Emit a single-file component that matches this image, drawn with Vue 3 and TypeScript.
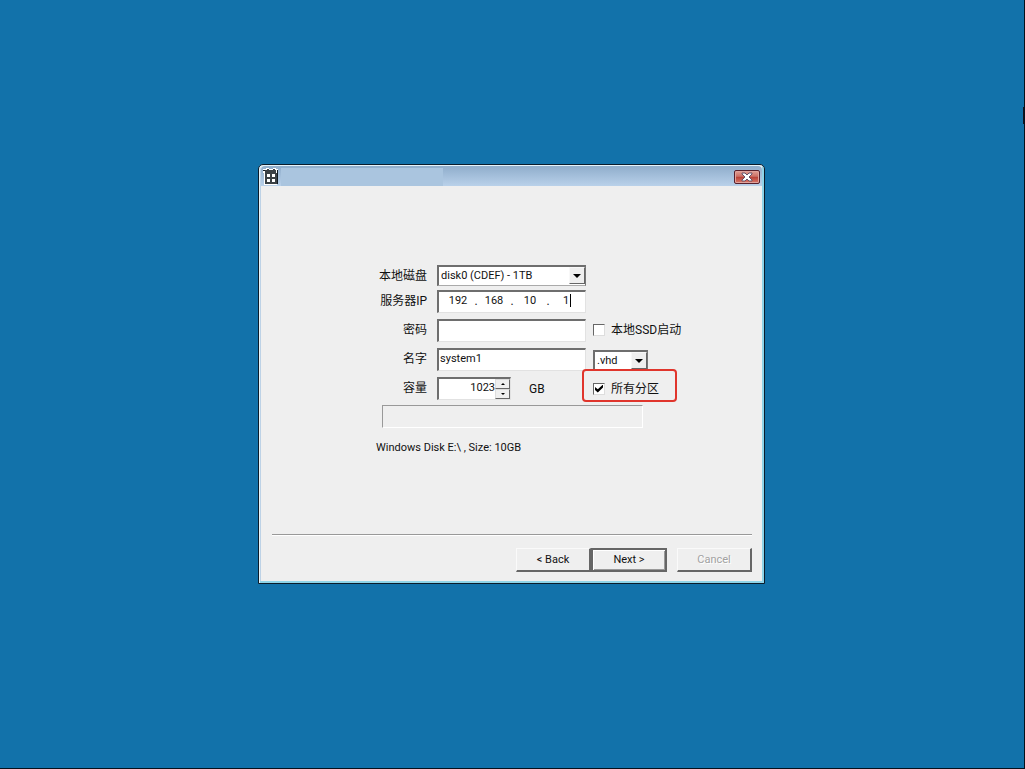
<script setup lang="ts">
import { ref } from 'vue'

const disk = ref('disk0 (CDEF) - 1TB')
const octets = ref(['192', '168', '10', '1'])
const password = ref('')
const name = ref('system1')
const extension = ref('.vhd')
const capacity = ref(1023)
const bootFromSsd = ref(false)
const allPartitions = ref(true)
</script>

<template>
  <main class="desktop">
    <section class="dialog" role="dialog" aria-label="System">
      <header class="titlebar">
        <svg class="app-icon" viewBox="0 0 16 17" aria-hidden="true">
          <path d="M0 1h3V0h3v1h4V0h3v1h2v4h-1v12H1V5H0z" fill="#fff" />
          <path d="M2 2h2V1h2v1h4V1h2v1h1v3h1v11H2z" fill="#3a4044" />
          <path d="M0 2h2v1H0zM14 2h1v2h-1zM14 4h1v12h-1z" fill="#101a22" />
          <path d="M4 6h3v3H4zM9 6h3v3H9zM4 11h3v3H4zM9 11h3v3H9z" fill="#fff" />
        </svg>
        <div class="caption"></div>
        <button class="close" type="button" aria-label="Close">
          <svg viewBox="0 0 14 10" aria-hidden="true">
            <path d="M2 1h3l2 2 2-2h3v1L9 5l3 3v1H9L7 7 5 9H2V8l3-3-3-3z" fill="#fff" stroke="#655269" stroke-width="1" />
          </svg>
        </button>
      </header>

      <form class="body" @submit.prevent>
        <div class="fields">
          <label class="name" for="disk">本地磁盘</label>
          <div class="combo disk">
            <select id="disk" v-model="disk"><option>disk0 (CDEF) - 1TB</option></select>
            <span class="drop"></span>
          </div>
          <span></span>

          <label class="name" for="octet0">服务器IP</label>
          <div class="box ip">
            <template v-for="(octet, i) in octets" :key="i">
              <span v-if="i > 0" class="dot">.</span>
              <span class="octet">
                <input :id="`octet${i}`" v-model="octets[i]" :aria-label="`IP ${i + 1}`" />
                <span v-if="i === 3" class="caret"></span>
              </span>
            </template>
          </div>
          <span></span>

          <label class="name" for="password">密码</label>
          <input id="password" v-model="password" class="box" type="password" />
          <label class="check"><input v-model="bootFromSsd" type="checkbox" />本地SSD启动</label>

          <label class="name" for="name">名字</label>
          <input id="name" v-model="name" class="box" type="text" />
          <div class="combo ext">
            <select v-model="extension" aria-label="Extension"><option>.vhd</option></select>
            <span class="drop"></span>
          </div>

          <label class="name" for="capacity">容量</label>
          <div class="size">
            <div class="box spin">
              <input id="capacity" v-model.number="capacity" type="text" />
              <div class="steps">
                <button type="button" aria-label="Increase" @click="capacity++"><i class="up"></i></button>
                <button type="button" aria-label="Decrease" @click="capacity--"><i class="down"></i></button>
              </div>
            </div>
            <span>GB</span>
          </div>
          <label class="check marked"><input v-model="allPartitions" type="checkbox" />所有分区</label>
        </div>

        <div class="progress" role="progressbar" aria-label="Progress"></div>
        <p class="info">Windows Disk E:\ , Size: 10GB</p>

        <footer class="actions">
          <button type="button">&lt; Back</button>
          <button type="submit" class="default">Next &gt;</button>
          <button type="button" class="cancel" disabled>Cancel</button>
        </footer>
      </form>
    </section>
  </main>
</template>

<style>
body {
  margin: 0;
}
</style>

<style scoped>
* {
  box-sizing: border-box;
}
.desktop {
  position: relative;
  display: flex;
  align-items: center;
  justify-content: center;
  min-height: 100vh;
  padding: 0 1px 20px 0;
  background: #1272aa;
  border-right: 1px solid #06101b;
  border-bottom: 1px solid #06101b;
  color: #111;
  font: 12px/16px Roboto, "Noto Sans CJK SC", sans-serif;
}
.desktop::after {
  content: "";
  position: absolute;
  top: 107px;
  right: 0;
  width: 1px;
  height: 17px;
  background: #111522;
}
input,
select,
button {
  margin: 0;
  padding: 0;
  border: 0;
  border-radius: 0;
  outline: 0;
  color: inherit;
  font: inherit;
  font-size: 11px;
}
.dialog {
  display: flex;
  flex-direction: column;
  width: 507px;
  max-width: 100%;
  min-height: 420px;
  background: #efefef;
  border: 1px solid #0a1c2b;
  border-radius: 5px 5px 0 0;
  box-shadow: inset 1px 1px #e6f4fa, inset -2px -2px #8fd4e8, inset 2px 0 #bdd2e6;
}
.titlebar {
  display: flex;
  align-items: center;
  height: 20px;
  margin: 1px 2px 0;
  padding: 1px 2px 0;
  background: linear-gradient(#8fadcb, #b9d1ea);
  border-radius: 4px 4px 0 0;
}
.app-icon {
  width: 16px;
  height: 17px;
}
.caption {
  width: 162px;
  height: 18px;
  margin: 0 auto 0 2px;
  background: #aac5df;
}
.close {
  display: grid;
  place-items: center;
  width: 26px;
  height: 14px;
  background: linear-gradient(#e3a095, #cb6f65 45%, #b73f35 50%, #d9786a);
  border: 1px solid #57202c;
  border-radius: 2px;
  box-shadow: inset 0 0 0 1px #e0a39c;
}
.close svg {
  width: 14px;
  height: 10px;
}
.body {
  display: flex;
  flex: 1;
  flex-direction: column;
  padding: 79px 12px 11px 13px;
}
.fields {
  display: grid;
  grid-template-columns: 158px 149px 1fr;
  grid-template-rows: 25px 29px 29px 29px 28px;
  align-items: start;
  column-gap: 7px;
}
.name {
  height: 23px;
  margin-right: 3px;
  line-height: 23px;
  text-align: right;
}
.box {
  width: 100%;
  height: 23px;
  padding: 0 1px 3px;
  background: #fff;
  border: 1px solid #fff;
  border-top: 2px solid #6e6e6e;
  border-left: 2px solid #6e6e6e;
  border-right-color: #e2e2e2;
  border-bottom-color: #e2e2e2;
}
.combo {
  position: relative;
  height: 21px;
  background: #fff;
  border: 2px solid #6e6e6e;
  border-right: 1px solid #777;
  border-bottom: 1px solid #aaa;
}
.combo select {
  display: block;
  width: 100%;
  height: 18px;
  padding-left: 2px;
  background: transparent;
  appearance: none;
}
.drop {
  position: absolute;
  top: 0;
  right: 0;
  display: grid;
  place-items: center;
  width: 16px;
  height: 17px;
  background: #efefef;
  border: 1px solid #f8f8f8;
  border-right-color: #666;
  border-bottom-color: #666;
  pointer-events: none;
}
.drop::before {
  content: "";
  border: 4px solid transparent;
  border-top-color: #000;
  border-bottom: 0;
}
.ext {
  width: 55px;
  margin-top: 2px;
}
.ip {
  display: flex;
  align-items: center;
  padding-left: 4px;
}
.octet {
  display: flex;
  flex: none;
  align-items: center;
  width: 30px;
}
.octet input {
  flex: none;
  width: 30px;
  text-align: center;
  background: transparent;
}
.caret {
  flex: none;
  width: 1px;
  height: 13px;
  margin-left: -11px;
  background: #000;
}
.dot {
  width: 6px;
  text-align: center;
}
.size {
  display: flex;
  align-items: center;
  gap: 18px;
}
.spin {
  display: flex;
  width: 74px;
  padding: 0;
}
.spin input {
  flex: 1;
  min-width: 0;
  height: 17px;
  text-align: right;
}
.steps {
  display: flex;
  flex-direction: column;
  width: 15px;
}
.steps button {
  display: grid;
  flex: 1;
  place-items: center;
  background: #efefef;
  border: 1px solid #ddd;
  border-right-color: #666;
  border-bottom-color: #666;
}
.up,
.down {
  border: 2px solid transparent;
}
.up {
  border-top: 0;
  border-bottom-color: #000;
}
.down {
  border-bottom: 0;
  border-top-color: #000;
}
.check {
  position: relative;
  display: flex;
  align-items: center;
  gap: 6px;
  height: 22px;
  justify-self: start;
}
.check input {
  display: grid;
  place-items: center;
  width: 12px;
  height: 12px;
  background: #fff;
  border: 1px solid #ddd;
  border-top-color: #666;
  border-left-color: #666;
  appearance: none;
}
.check input:checked::before {
  content: "";
  width: 8px;
  height: 8px;
  background: #000;
  clip-path: polygon(0 30%, 35% 60%, 100% 0, 100% 38%, 35% 100%, 0 68%);
}
.marked {
  height: 23px;
}
.marked::after {
  content: "";
  position: absolute;
  inset: -8px -18px -2px -11px;
  border: 2px solid #e0352c;
  border-radius: 4px;
}
.progress {
  width: 261px;
  height: 23px;
  margin-left: 110px;
  border: 1px solid #fff;
  border-top-color: #999;
  border-left-color: #999;
}
.info {
  margin: 12px 0 0 104px;
  font-size: 11px;
}
.actions {
  display: flex;
  justify-content: flex-end;
  margin-top: auto;
  padding-top: 13px;
  border-top: 1px solid #999;
  box-shadow: inset 0 1px #fff;
}
.actions button {
  width: 75px;
  height: 24px;
  background: #efefef;
  border: 1px solid #fafafa;
  border-right: 2px solid #666;
  border-bottom: 2px solid #666;
}
.actions .default {
  width: 76px;
  border: 2px solid #666;
  box-shadow: inset 1px 1px #fff, inset -1px -1px #999;
}
.actions .cancel {
  margin-left: 10px;
  color: #a2a2a2;
  text-shadow: 1px 1px #fff;
}
</style>
